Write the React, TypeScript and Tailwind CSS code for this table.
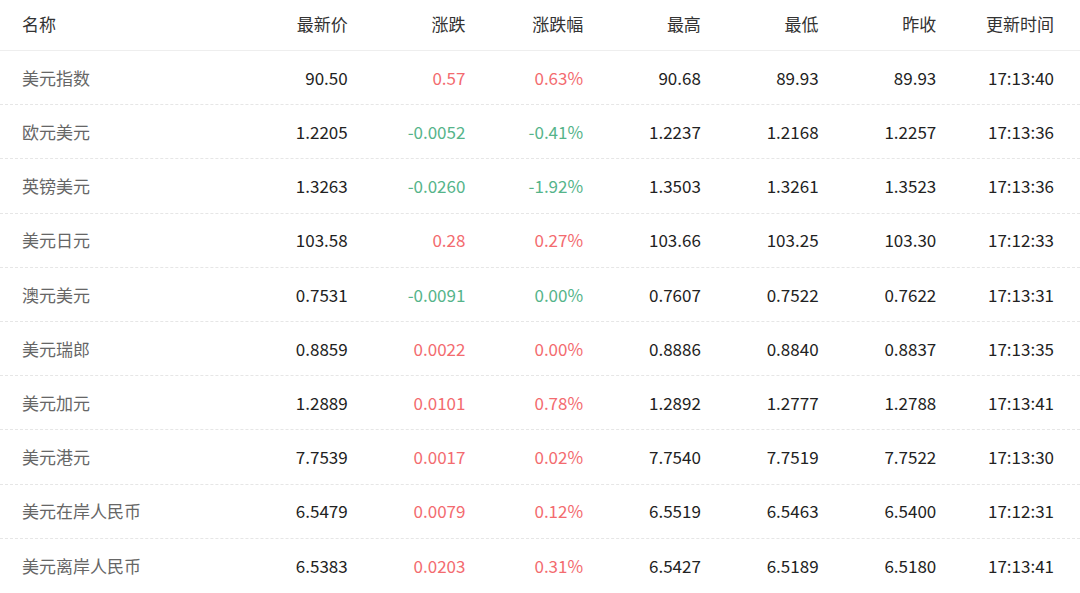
const rows: [string, string, string, string, string, string, string, string][] = [
  ["美元指数", "90.50", "0.57", "0.63%", "90.68", "89.93", "89.93", "17:13:40"],
  ["欧元美元", "1.2205", "-0.0052", "-0.41%", "1.2237", "1.2168", "1.2257", "17:13:36"],
  ["英镑美元", "1.3263", "-0.0260", "-1.92%", "1.3503", "1.3261", "1.3523", "17:13:36"],
  ["美元日元", "103.58", "0.28", "0.27%", "103.66", "103.25", "103.30", "17:12:33"],
  ["澳元美元", "0.7531", "-0.0091", "0.00%", "0.7607", "0.7522", "0.7622", "17:13:31"],
  ["美元瑞郎", "0.8859", "0.0022", "0.00%", "0.8886", "0.8840", "0.8837", "17:13:35"],
  ["美元加元", "1.2889", "0.0101", "0.78%", "1.2892", "1.2777", "1.2788", "17:13:41"],
  ["美元港元", "7.7539", "0.0017", "0.02%", "7.7540", "7.7519", "7.7522", "17:13:30"],
  ["美元在岸人民币", "6.5479", "0.0079", "0.12%", "6.5519", "6.5463", "6.5400", "17:12:31"],
  ["美元离岸人民币", "6.5383", "0.0203", "0.31%", "6.5427", "6.5189", "6.5180", "17:13:41"],
];

const headers = ["最新价", "涨跌", "涨跌幅", "最高", "最低", "昨收", "更新时间"];

export default function App() {
  return (
    <div className="w-[1080px] h-[593px] bg-white overflow-hidden font-['Noto_Sans_CJK_SC','Noto_Sans',sans-serif] text-[17px]">
      <div className="flex items-center h-[51px] pb-[3px] border-b border-[#eeeeee] pr-[26px] text-[#333333]">
        <div className="w-[230px] pl-[22px]">名称</div>
        {headers.map((h) => (
          <div key={h} className="flex-1 text-right">
            {h}
          </div>
        ))}
      </div>
      {rows.map((r, i) => {
        const down = r[2].startsWith("-");
        const changeColor = down ? "text-[#55b48a]" : "text-[#f36b6f]";
        return (
          <div
            key={r[0]}
            className={`flex items-center h-[54.2px] pr-[26px] ${
              i < rows.length - 1 ? "border-b border-dashed border-[#e6e6e6]" : ""
            }`}
          >
            <div className="w-[230px] pl-[22px] text-[#666666]">{r[0]}</div>
            <div className="flex-1 text-right text-[#222222]">{r[1]}</div>
            <div className={`flex-1 text-right ${changeColor}`}>{r[2]}</div>
            <div className={`flex-1 text-right ${changeColor}`}>{r[3]}</div>
            <div className="flex-1 text-right text-[#222222]">{r[4]}</div>
            <div className="flex-1 text-right text-[#222222]">{r[5]}</div>
            <div className="flex-1 text-right text-[#222222]">{r[6]}</div>
            <div className="flex-1 text-right text-[#222222]">{r[7]}</div>
          </div>
        );
      })}
    </div>
  );
}
